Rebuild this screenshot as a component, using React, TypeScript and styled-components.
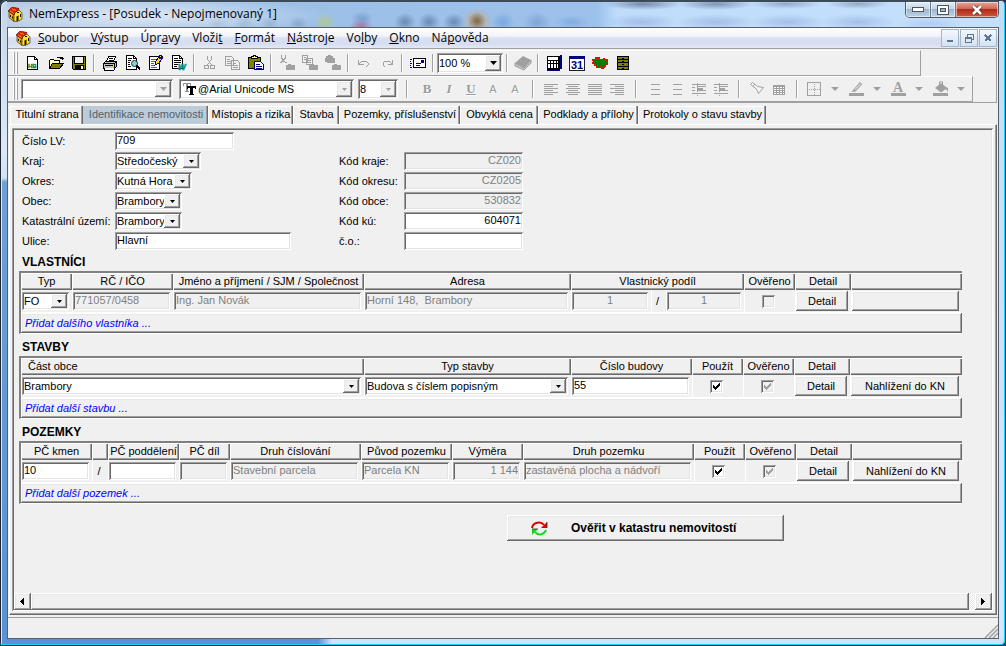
import React from "react";
import styled, { createGlobalStyle, css } from "styled-components";

const face = "#f0f0f0";
const sunken = css`
  box-shadow: inset 1px 1px #a0a0a0, inset -1px -1px #fff, inset 2px 2px #696969, inset -2px -2px #e3e3e3;
`;
const raised = css`
  box-shadow: inset -1px -1px #696969, inset 1px 1px #fff, inset -2px -2px #a0a0a0, inset 2px 2px #e8e8e8;
`;

const GlobalStyle = createGlobalStyle`
  * { box-sizing: border-box; }
  body { margin: 0; background: #26323f; }
  body, button, input, select, table {
    font-family: "Liberation Sans", Arial, sans-serif;
    font-size: 11px;
    color: #000;
  }
  button { cursor: default; }
`;

/* ---------- window frame ---------- */

const Frame = styled.div`
  min-height: 100vh;
  display: flex;
  flex-direction: column;
  padding: 0 7px 7px;
  border-radius: 6px 6px 4px 4px;
  box-shadow: inset 1px 1px #1c2733, inset -1px -1px #1c2733, inset 2px 2px #d9ebfb, inset -2px -2px #12d5f5;
  background:
    linear-gradient(90deg, #5b92cf 0 318px, #cfe4fb 332px) bottom / 100% 8px no-repeat,
    linear-gradient(180deg, #c4d6e8 0, #dbe9f8 150px, #d0e2f6 178px, #6f9fd6 182px, #5b92cf) left / 8px 100% no-repeat,
    linear-gradient(180deg, #c3dcf6, #d4e8fd) right / 8px 100% no-repeat,
    #b5d0ee;
`;

type Blob = [x: number, y: number, rx: number, ry: number, color: string];
const reflections: Blob[] = [
  [140, 14, 190, 20, "#e6eef6dd"],
  [218, 21, 10, 7, "#5d779455"],
  [244, 21, 10, 7, "#5d779455"],
  [270, 21, 9, 7, "#5d779455"],
  [298, 21, 10, 7, "#5d779466"],
  [325, 20, 11, 9, "#b9cf5999"],
  [362, 17, 11, 8, "#5a83bb88"],
  [361, 24, 12, 6, "#c4476a99"],
  [405, 20, 11, 9, "#4f6f96aa"],
  [429, 20, 11, 9, "#4f6f96aa"],
  [454, 20, 11, 9, "#4f6f96aa"],
  [477, 19, 9, 9, "#4a3a2a99"],
  [477, 19, 15, 13, "#d9a45acc"],
  [503, 20, 12, 10, "#5f92cf88"],
  [537, 20, 14, 10, "#5b86bd77"],
  [572, 20, 18, 7, "#5f8fca66"],
  [643, 2, 40, 6, "#33445f88"],
  [642, 20, 36, 8, "#6a7fc455"],
  [716, 2, 38, 6, "#33445f77"],
  [716, 20, 40, 8, "#6a7fc455"],
  [786, 2, 36, 5, "#33445f55"],
  [788, 20, 38, 8, "#6a7fc455"],
  [858, 2, 32, 5, "#33445f55"],
  [858, 20, 38, 8, "#6a7fc455"],
  [930, 22, 34, 6, "#6a7fc433"],
];
const reflectionLayers = reflections
  .map(([x, y, rx, ry, c]) => `radial-gradient(${rx}px ${ry}px at ${x - 7}px ${y}px, ${c}, transparent)`)
  .join(",");

const TitleBar = styled.header`
  display: flex;
  align-items: flex-start;
  height: 27px;
  border-top: 2px solid #3c4a5a;
  background: ${reflectionLayers}, linear-gradient(90deg, #b4c9e0 0, #9dbfe6 240px, #9cc1ec 590px, #bfdcfa 610px, #c4e0fb);
`;

const TitleText = styled.h1`
  flex: 1;
  display: flex;
  align-items: center;
  gap: 6px;
  height: 24px;
  margin: 0;
  padding-left: 1px;
  font: 400 12px/24px "Open Sans", "Segoe UI", sans-serif;
  white-space: nowrap;
`;

const CaptionButtons = styled.div`
  display: flex;
  height: 16px;
  border: 1px solid #4c5a6b;
  border-top: 0;
  border-radius: 0 0 5px 5px;
  overflow: hidden;
`;

const CaptionButton = styled.button<{ $close?: boolean }>`
  display: grid;
  place-items: center;
  width: ${(p) => (p.$close ? 42 : 25)}px;
  padding: 0;
  border: 0;
  border-right: ${(p) => (p.$close ? "0" : "1px solid #66788c")};
  box-shadow: inset 0 0 0 1px #ffffff88;
  background: ${(p) =>
    p.$close
      ? "linear-gradient(#e3a79b 0, #cf6a55 45%, #b3291a 50%, #c95a3c)"
      : "linear-gradient(#e3edf7 0, #c4d5e7 45%, #9fb5cd 50%, #bdd3e9)"};
`;

const Client = styled.div`
  flex: 1;
  display: flex;
  flex-direction: column;
  border: 1px solid #55606c;
  background: ${face};
`;

/* ---------- menu ---------- */

const MenuBar = styled.nav`
  display: flex;
  align-items: center;
  height: 20px;
  padding: 0 1px 0 8px;
  background: linear-gradient(#fff 0, #f2f4fb 40%, #dbe1f2 50%, #d6ddf0 80%, #e4e9f6);
`;

const MenuItems = styled.ul`
  flex: 1;
  display: flex;
  margin: 0;
  padding: 0 0 0 1px;
  list-style: none;
`;

const MenuItem = styled.button`
  padding: 0 6px;
  border: 0;
  background: none;
  font: 12px/20px "Open Sans", "Segoe UI", sans-serif;
  white-space: nowrap;
`;

const MdiButtons = styled.div`
  display: flex;
  gap: 1px;
`;

const MdiButton = styled.button`
  display: grid;
  place-items: center;
  width: 18px;
  height: 18px;
  padding: 0;
  border: 1px solid #a3b5c8;
  background: linear-gradient(#f3f8fd, #d3e2f3);
`;

/* ---------- toolbars ---------- */

const ToolArea = styled.div`
  padding-top: 1px;
  margin-right: 1px;
  border: 1px solid #a0a0a0;
  border-left: 0;
`;

const Toolbar = styled.div<{ $gap: number }>`
  display: flex;
  align-items: center;
  height: 26px;
  margin-right: ${(p) => p.$gap}px;
  padding-left: 5px;
  border: 1px solid #a0a0a0;
  border-top-color: #fff;
  border-left: 0;
`;

const Grip = styled.span`
  width: 6px;
  height: 22px;
  margin-right: 2px;
  background: linear-gradient(90deg, #fff 0 1px, #a0a0a0 1px 2px, ${face} 2px 3px, #fff 3px 4px, #a0a0a0 4px 5px, ${face} 5px);
`;

const ToolButton = styled.button<{ $w?: number }>`
  display: grid;
  place-items: center;
  width: ${(p) => p.$w ?? 23}px;
  height: 22px;
  padding: 0;
  border: 0;
  background: none;
`;

const Separator = styled.span<{ $w?: number }>`
  width: ${(p) => p.$w ?? 8}px;
  height: 18px;
  background: linear-gradient(90deg, #a0a0a0 0 1px, #fff 1px 2px) center / 2px 100% no-repeat;
`;

const Spacer = styled.span<{ $w: number }>`
  width: ${(p) => p.$w}px;
`;

const Glyph = styled.span<{ $i?: boolean; $u?: boolean; $thin?: boolean }>`
  font: ${(p) => (p.$i ? "italic" : "normal")} ${(p) => (p.$thin ? "400 11px" : "700 13px")} / 16px
    ${(p) => (p.$thin ? '"Liberation Sans", sans-serif' : '"Liberation Serif", serif')};
  text-decoration: ${(p) => (p.$u ? "underline" : "none")};
  color: #9a9a9a;
  text-shadow: 1px 1px #fff;
`;

/* ---------- fields ---------- */

const TextField = styled.input<{ $w?: number; $align?: string }>`
  display: block;
  width: ${(p) => (p.$w ? `${p.$w}px` : "100%")};
  height: 18px;
  padding: 0 2px 2px;
  border: 0;
  border-radius: 0;
  outline: 0;
  background: #fff;
  text-align: ${(p) => p.$align ?? "left"};
  ${sunken}
  &:disabled {
    background: ${face};
    color: #808080;
  }
`;

const ComboBox = styled.span<{ $w?: number; $h?: number }>`
  display: inline-grid;
  align-items: center;
  width: ${(p) => (p.$w ? `${p.$w}px` : "100%")};
  height: ${(p) => p.$h ?? 18}px;
  background: #fff;
  ${sunken}
  > * {
    grid-area: 1 / 1;
  }
`;

const ComboSelect = styled.select<{ $indent?: number }>`
  appearance: none;
  width: 100%;
  height: 100%;
  padding: 0 16px 1px ${(p) => p.$indent ?? 2}px;
  border: 0;
  outline: 0;
  background: none;
`;

const ComboArrow = styled.span<{ $dim?: boolean; $h: number }>`
  justify-self: end;
  display: grid;
  place-items: center;
  width: 16px;
  height: ${(p) => p.$h - 4}px;
  margin-right: 2px;
  pointer-events: none;
  color: ${(p) => (p.$dim ? "#a0a0a0" : "#000")};
  background: ${face};
  ${raised}
`;

const ComboIcon = styled.span`
  display: grid;
  justify-self: start;
  padding-left: 4px;
  pointer-events: none;
`;

const Combo = (p: { label: string; value?: string; w?: number; h?: number; dim?: boolean; id?: string; icon?: React.ReactNode; wide?: boolean }) => {
  const h = p.h ?? 18;
  return (
    <ComboBox $w={p.w} $h={h}>
      <ComboSelect id={p.id} aria-label={p.label} $indent={p.icon ? 19 : 2}>
        <option>{p.value ?? ""}</option>
      </ComboSelect>
      {p.icon && <ComboIcon>{p.icon}</ComboIcon>}
      <ComboArrow $dim={p.dim} $h={h}>
        <svg width={p.wide ? 7 : 5} height={p.wide ? 4 : 3} viewBox="0 0 7 4">
          <path d="M0 0h7L3.5 4z" fill="currentColor" />
        </svg>
      </ComboArrow>
    </ComboBox>
  );
};

const PushButton = styled.button`
  display: block;
  width: 100%;
  height: 20px;
  padding: 0;
  border: 0;
  background: ${face};
  ${raised}
`;

const TickWrap = styled.span`
  display: inline-grid;
  place-items: center;
  vertical-align: middle;
  > * {
    grid-area: 1 / 1;
  }
  svg {
    pointer-events: none;
  }
`;

const TickBox = styled.input`
  appearance: none;
  width: 13px;
  height: 13px;
  margin: 0;
  background: #fff;
  ${sunken}
  &:disabled {
    background: ${face};
  }
  &:not(:checked) + svg {
    display: none;
  }
`;

const Tick = (p: { label: string; checked?: boolean; disabled?: boolean }) => (
  <TickWrap>
    <TickBox type="checkbox" aria-label={p.label} defaultChecked={p.checked} disabled={p.disabled} />
    <svg width="7" height="7" viewBox="0 0 7 7" shapeRendering="crispEdges" fill={p.disabled ? "#a0a0a0" : "#000"}>
      <path d="M0 2h1v3H0zM1 3h1v3H1zM2 4h1v3H2zM3 3h1v3H3zM4 2h1v3H4zM5 1h1v3H5zM6 0h1v3H6z" />
    </svg>
  </TickWrap>
);

/* ---------- tabs and panel ---------- */

const Tabs = styled.div`
  display: flex;
  height: 18px;
  margin: 3px 0 0 2px;
`;

const Tab = styled.button<{ $w: number; $on?: boolean }>`
  width: ${(p) => p.$w}px;
  padding: 0 0 2px 2px;
  border: 0;
  border-right: 1px solid #696969;
  white-space: nowrap;
  background: ${(p) => (p.$on ? "#bccbd8" : face)};
  color: ${(p) => (p.$on ? "#55606a" : "#000")};
  box-shadow: inset -1px 0 #a0a0a0, inset 1px 1px ${(p) => (p.$on ? "#bccbd8" : "#fff")};
`;

const TabBody = styled.main`
  flex: 1;
  display: flex;
  margin: 0 1px 1px;
  padding: 3px 3px 3px 2px;
  border: 1px solid #fff;
  border-right-color: #696969;
  border-bottom-color: #696969;
  box-shadow: inset -1px -1px #a0a0a0;
`;

const Sheet = styled.div`
  flex: 1;
  display: flex;
  flex-direction: column;
  min-width: 0;
  padding: 3px 1px 1px 2px;
  ${sunken}
`;

const FormGrid = styled.div`
  display: grid;
  grid-template-columns: 93px 224px 65px 119px;
  grid-auto-rows: 20px;
  align-items: center;
  padding-left: 8px;
`;

const Label = styled.label<{ $col?: number }>`
  grid-column: ${(p) => p.$col ?? 1};
  white-space: nowrap;
`;

const Section = styled.section`
  padding: 3px 30px 2px 5px;
`;

const SectionTitle = styled.h2`
  margin: 0;
  padding-left: 3px;
  font-size: 12px;
  font-weight: 700;
  line-height: 17px;
`;

const DataTable = styled.table`
  width: 100%;
  table-layout: fixed;
  border-spacing: 0;
  background: #fff;
  border: 2px solid #696969;
  border-top-color: #808080;
  border-left-color: #808080;
  border-right: 0;
  border-bottom: 1px solid #fff;
`;

const HeadCell = styled.th<{ $left?: boolean }>`
  height: 17px;
  padding: 0 0 1px ${(p) => (p.$left ? 7 : 0)}px;
  font-weight: 400;
  line-height: 15px;
  text-align: ${(p) => (p.$left ? "left" : "center")};
  white-space: nowrap;
  background: ${face};
  box-shadow: inset 1px 1px #fff, inset -1px -1px #696969, inset -2px -2px #a0a0a0;
`;

const Cell = styled.td`
  height: 23px;
  padding: 0 3px 0 0;
  border-left: 1px solid #fff;
  border-bottom: 1px solid #fff;
  text-align: center;
  background: ${face};
`;

const AddCell = styled.td`
  height: 20px;
  padding: 1px 0 0 4px;
  line-height: 15px;
  background: ${face};
  ${raised}
`;

const AddLink = styled.a`
  color: #0000ff;
  font-style: italic;
  text-decoration: none;
`;

const VerifyButton = styled.button`
  display: flex;
  align-items: center;
  gap: 23px;
  width: 277px;
  height: 26px;
  margin: 9px auto 0 493px;
  padding: 0 0 0 24px;
  border: 0;
  font-size: 12px;
  font-weight: 700;
  white-space: nowrap;
  background: ${face};
  ${raised}
`;

const ScrollBar = styled.div`
  display: flex;
  height: 17px;
  margin-top: auto;
  background: repeating-conic-gradient(#fff 0 25%, #e6e6e6 0 50%) 0 0 / 2px 2px;
`;

const ScrollButton = styled.button`
  display: grid;
  place-items: center;
  width: 17px;
  padding: 0 2px 0 0;
  border: 0;
  background: ${face};
  ${raised}
`;

const ScrollThumb = styled.div`
  flex: 1;
  margin-right: 6px;
  background: ${face};
  ${raised}
`;

const StatusBar = styled.footer`
  display: flex;
  justify-content: flex-end;
  align-items: flex-end;
  height: 21px;
  margin-top: 1px;
  border-top: 1px solid #a0a0a0;
`;

/* ---------- drawings ---------- */

const Svg = (p: { w?: number; h?: number; children: React.ReactNode }) => (
  <svg width={p.w ?? 16} height={p.h ?? 16} viewBox={`0 0 ${p.w ?? 16} ${p.h ?? 16}`} shapeRendering="crispEdges" fill="none">
    {p.children}
  </svg>
);

const G = "#a0a0a0";

const Logo = () => (
  <svg width="15" height="15" viewBox="0 0 15 15">
    <path d="M1 4l5 4v6.500l-5-4z" fill="#f2b705" stroke="#2a1200" strokeWidth=".6" />
    <path d="M6 8l1-3 4-2 3 3v6l-5 2.700-3-.5z" fill="#ffe22e" stroke="#2a1200" strokeWidth=".6" />
    <path d="M0 4l4-4 7 1.500-1 2-3 1.500-1 3z" fill="#e02010" stroke="#4a0000" strokeWidth=".6" />
    <path d="M2 4l4 2.500M4 2l4 1.500" stroke="#ffb000" strokeWidth=".8" />
    <path d="M8.500 9.500l2-1v5l-2 .8z" fill="#201000" />
    <path d="M2.500 8v2M4.500 9.500v2M12.500 7v3M9 5.500h2" stroke="#201000" />
  </svg>
);

const NewDoc = () => (
  <Svg>
    <path d="M2.500 1.500h7l3 3v10h-10z" fill="#fff" stroke="#000" />
    <path d="M9.500 1.500v3h3" stroke="#000" />
    <text x="3" y="13" fontSize="6" fontWeight="700" fill="#008040" stroke="#008040" strokeWidth=".3">HB</text>
  </Svg>
);
const Open = () => (
  <Svg>
    <path d="M1.500 13.500v-8l1-1h3l1 1h5v3" fill="#ffffc0" stroke="#000" />
    <path d="M1.500 13.500l3-5h11l-4 5z" fill="#808000" stroke="#000" />
    <path d="M9.500 3v-1h4v2M12 3.500h4M14.500 1.500v3" stroke="#000" />
  </Svg>
);
const Save = () => (
  <Svg>
    <path d="M1.500 1.500h13v13h-12l-1-1z" fill="#808000" stroke="#000" />
    <path d="M4 2h8v6H4z" fill="#f0f0f0" stroke="none" />
    <path d="M4 10h9v4H4z" fill="#000" />
    <path d="M10 11h2v3h-2z" fill="#f0f0f0" />
    <path d="M3.500 2v6.500h8.500v-6.500" stroke="#000" />
  </Svg>
);
const Print = () => (
  <Svg>
    <path d="M4.500 6.500l2-5h7l-2 5" fill="#fff" stroke="#000" />
    <path d="M7 3.500h4M6.500 5.500h4" stroke="#000" />
    <path d="M1.500 8.500l2-2h10l1 1v4l-2 2h-11z" fill="#c0c0c0" stroke="#000" />
    <path d="M1.500 8.500h11v5M12.500 8.500l2-2M3 10.500h8" stroke="#000" />
    <path d="M2.500 13.500v2h9l2-3" fill="#fff" stroke="#000" />
    <path d="M9 11h2v1H9z" fill="#ffe000" />
  </Svg>
);
const Preview = () => (
  <Svg>
    <path d="M1.500 .5h7l3 3v11h-10z" fill="#fff" stroke="#000" />
    <path d="M8.500 .5v3h3M3 3.500h4M3 5.500h3M3 7.500h2M3 9.500h2M3 11.500h3" stroke="#000" />
    <circle cx="9.500" cy="8.500" r="3" fill="#7fd6d6" stroke="#303030" shapeRendering="auto" />
    <path d="M11.500 10.500l3.500 4" stroke="#000" strokeWidth="2" />
  </Svg>
);
const Notes = () => (
  <Svg>
    <path d="M1.500 1.500h10v13h-10z" fill="#fff" stroke="#000" />
    <path d="M3 4.500h5M3 6.500h4M3 8.500h3M3 10.500h3M3 12.500h6" stroke="#606060" />
    <path d="M7 10l1-4 4-6 3 2-4 6z" fill="#ffe000" stroke="#000080" />
    <path d="M11 2l3 2" stroke="#0000c0" strokeWidth="2" />
  </Svg>
);
const WordExport = () => (
  <Svg>
    <path d="M1.500 .5h7l3 3v10h-10z" fill="#fff" stroke="#000" />
    <path d="M8.500 .5v3h3M3 3.500h4M3 5.500h7M3 7.500h7M3 9.500h4M3 11.500h3" stroke="#000" />
    <text x="7" y="15" fontSize="10" fontWeight="700" fontStyle="italic" fill="#009090" stroke="#009090" strokeWidth=".5">w</text>
  </Svg>
);
const Cut = () => (
  <Svg>
    <path d="M5.500 1v3l4 6M9.500 1v3l-4 6" stroke={G} />
    <circle cx="4.500" cy="12" r="2" stroke={G} />
    <circle cx="10.500" cy="12" r="2" stroke={G} />
  </Svg>
);
const Copy = () => (
  <Svg>
    <path d="M.5 1.500h6l2 2v7h-8zM6.500 5.500h6l2 2v7h-8z" fill="#f0f0f0" stroke={G} />
    <path d="M2 4.500h3M2 6.500h4M2 8.500h4M8 8.500h3M8 10.500h5M8 12.500h5" stroke={G} />
  </Svg>
);
const Paste = () => (
  <Svg>
    <path d="M.5 2.500h12v11h-12z" fill="#808000" stroke="#000" />
    <path d="M3.500 3.500v-2h2v-1h2v1h2v2z" fill="#ffff80" stroke="#000" />
    <path d="M6.500 6.500h6l3 3v5h-9z" fill="#fff" stroke="#000080" />
    <path d="M8 9.500h4M8 11.500h6M8 13h6" stroke="#000080" />
  </Svg>
);
const CutTo = () => (
  <Svg>
    <path d="M2.500 0v3l3 4M6.500 0v3l-4 4M1 7.500h2M6 7.500h2" stroke={G} />
    <path d="M7 10h2v-1h3v1h4v5H7z" fill={G} />
  </Svg>
);
const CopyTo = () => (
  <Svg>
    <path d="M.5 .5h5v7h-5zM4.500 3.500h6v6h-6z" fill="#f0f0f0" stroke={G} />
    <path d="M2 2.500h2M2 4.500h2M6 5.500h3M6 7.500h3" stroke={G} />
    <path d="M7 10h2v-1h3v1h4v5H7z" fill={G} />
  </Svg>
);
const PasteTo = () => (
  <Svg>
    <path d="M1 1h2v-1h3v1h2v2h2v5H2v-1H0V3h1z" fill={G} />
    <path d="M7 10h2v-1h3v1h4v5H7z" fill={G} />
  </Svg>
);
const Undo = () => (
  <Svg>
    <path d="M2.500 5v4.500h5M3 9l3-3h4l2 2v2l-2 2" stroke={G} />
  </Svg>
);
const Redo = () => (
  <Svg>
    <path d="M13.500 5v4.500h-5M13 9l-3-3h-4l-2 2v2l2 2" stroke={G} />
  </Svg>
);
const Mail = () => (
  <Svg>
    <path d="M3.500 3.500h12v9h-12z" fill="#fff" stroke="#000" />
    <path d="M11 5h3v3h-3z" fill="#000080" />
    <path d="M6 8.500h5M6 10.500h4" stroke="#000080" />
    <path d="M0 4.500h2M0 6.500h1M0 8.500h2M0 10.500h1M0 12.500h2" stroke="#000080" />
  </Svg>
);
const Book = () => (
  <svg width="18" height="16" viewBox="0 0 18 16">
    <path d="M1 8l8-7 8 4-7 8z" fill={G} />
    <path d="M1 8v3l9 4 7-7V5l-7 8z" fill="#c4c4c4" stroke={G} />
  </svg>
);
const Calculator = () => (
  <Svg>
    <path d="M1 1h13v14H1z" fill="#000" />
    <path d="M2 2h10v3H2z" fill="#fff" />
    <path d="M2 7h10M2 9.500h10M2 12h10" stroke="#fff" strokeWidth="2" strokeDasharray="2 1" />
    <path d="M14 0h2v14h-2z" fill="#000080" />
    <path d="M1 15h13" stroke="#000080" />
  </Svg>
);
const Calendar = () => (
  <Svg>
    <path d="M.5 1.500h15v14H.5z" fill="#fff" stroke="#202020" />
    <path d="M1 1h15v3H1z" fill="#000080" />
    <text x="2" y="14" fontSize="11" fontWeight="700" fill="#000080">31</text>
  </Svg>
);
const CzechMap = () => (
  <Svg>
    <path d="M1 5l2-1 2-2 3 2 2 1 2-1 4 1v3l-3 3-2 2-3-1-2 1-3-3-2-2z" fill="#008000" stroke="#008000" />
    <path d="M1 5l2-1 2-2 3 2 2 1 2-1 4 1v3l-3 3-2 2-3-1-2 1-3-3-2-2z" stroke="#ff0000" strokeWidth="2" strokeDasharray="2 1" />
  </Svg>
);
const Cabinet = () => (
  <Svg>
    <path d="M2.500 1.500h11v13h-11z" fill="#808000" stroke="#000" />
    <path d="M3 4.500h10M3 7.500h10M3 11.500h10" stroke="#000" />
    <path d="M7 3h2M7 6h2M7 9.500h2M7 13h2" stroke="#000" />
  </Svg>
);
const FontMark = () => (
  <Svg w={14} h={14}>
    <path d="M0 1h8v3H7V2H5v7h1v1H2V9h1V2H1v2H0z" fill="#909090" />
    <path d="M4 4h9v3h-1V6h-2v6h1v1H6v-1h1V6H5v1H4z" fill="#000" />
  </Svg>
);

const Lines = (p: { rows: [number, number][] }) => (
  <Svg>
    {p.rows.map(([x, w], i) => (
      <path key={i} d={`M${x} ${i * 2 + 3}.5h${w}`} stroke={G} />
    ))}
  </Svg>
);
const alignLeft: [number, number][] = [[1, 14], [1, 9], [1, 14], [1, 9], [1, 14], [1, 9]];
const alignCenter: [number, number][] = [[1, 14], [3, 10], [1, 14], [3, 10], [1, 14], [3, 10]];
const alignFull: [number, number][] = [[1, 14], [1, 14], [1, 14], [1, 14], [1, 14], [1, 14]];
const alignRight: [number, number][] = [[1, 14], [6, 9], [1, 14], [6, 9], [1, 14], [6, 9]];

const ListLines = () => (
  <Svg>
    <path d="M4 3.500h9M4 8.500h9M4 13.500h9" stroke={G} />
  </Svg>
);
const Indent = () => (
  <Svg>
    <path d="M1 3.500h14M6 5.500h9M6 7.500h6M6 9.500h9M1 12.500h14M1 9.500h3M1 6.500h3" stroke={G} />
    <path d="M6.500 2v13" stroke={G} strokeDasharray="1 1" />
    <path d="M7 5h8v1H7zM7 7h5v2H7z" fill={G} />
  </Svg>
);
const Painter = () => (
  <svg width="16" height="16" viewBox="0 0 16 16">
    <path d="M1.500 3.500l2-2 5 4 6 1-5 6-2-4.500z" fill="#f6f6f6" stroke={G} />
    <path d="M4 5l2-2" stroke={G} />
  </svg>
);
const Grid = () => (
  <Svg>
    <path d="M2 4h12v10H2z" fill={G} />
    <path d="M3 6.500h10M3 8.500h10M3 10.500h10M3 12.500h10" stroke="#fff" strokeDasharray="2 1" />
  </Svg>
);
const Borders = () => (
  <Svg>
    <path d="M1.500 1.500h13v13h-13z" stroke={G} />
    <path d="M8.500 3v11M3 8.500h11" stroke={G} strokeDasharray="1 1" />
  </Svg>
);
const Highlighter = () => (
  <svg width="16" height="16" viewBox="0 0 16 16">
    <path d="M5 9l7-8 2.500 2-7 7.500-4 .5z" fill={G} />
    <path d="M7 8.500l6-6" stroke="#fff" />
    <path d="M1 12h15v3H1z" fill={G} />
  </svg>
);
const FontColor = () => (
  <Svg>
    <text x="3" y="11" fontSize="14" fontWeight="700" fontFamily="Liberation Serif, serif" fill={G}>A</text>
    <path d="M1 12h15v3H1z" fill={G} />
  </Svg>
);
const Bucket = () => (
  <svg width="16" height="16" viewBox="0 0 16 16">
    <path d="M3 7l6-5 5 4 2 1v4l-2-3-5 3.500z" fill={G} />
    <path d="M7.500 6V.8h3V4" fill="none" stroke={G} />
    <path d="M1 12h15v3H1z" fill={G} />
  </svg>
);
const Down = () => (
  <svg width="8" height="4" viewBox="0 0 8 4">
    <path d="M0 0h8L4 4z" fill={G} />
  </svg>
);
const Refresh = () => (
  <svg width="17" height="15" viewBox="0 0 17 15">
    <path d="M1 7c1-6 9-7 12-3" fill="none" stroke="#e00000" strokeWidth="2" />
    <path d="M16 1v6h-6z" fill="#e00000" />
    <path d="M15 9c-2 5-8 6-11 2" fill="none" stroke="#10d818" strokeWidth="2" />
    <path d="M1 8h6l-6 6z" fill="#10d818" />
    <path d="M1 8h6M16 1v6" stroke="#204020" strokeWidth=".8" />
  </svg>
);

/* ---------- data ---------- */

const menus: [string, string, string][] = [
  ["", "S", "oubor"],
  ["", "V", "ýstup"],
  ["Úpr", "a", "vy"],
  ["Vloži", "t", ""],
  ["", "F", "ormát"],
  ["", "N", "ástroje"],
  ["Vo", "l", "by"],
  ["", "O", "kno"],
  ["Ná", "p", "ověda"],
];

const mainTools: [string, React.ReactNode][][] = [
  [["Nový", <NewDoc />], ["Otevřít", <Open />], ["Uložit", <Save />]],
  [["Tisk", <Print />], ["Náhled", <Preview />], ["Poznámky", <Notes />], ["Export", <WordExport />]],
  [["Vyjmout", <Cut />], ["Kopírovat", <Copy />], ["Vložit", <Paste />]],
  [["Vyjmout do", <CutTo />], ["Kopírovat do", <CopyTo />], ["Vložit do", <PasteTo />]],
  [["Zpět", <Undo />], ["Znovu", <Redo />]],
  [["Odeslat", <Mail />]],
];
const extraTools: [string, React.ReactNode][] = [
  ["Kalkulačka", <Calculator />],
  ["Kalendář", <Calendar />],
  ["Mapa", <CzechMap />],
  ["Archiv", <Cabinet />],
];
const formatTools: [string, React.ReactNode][][] = [
  [
    ["Tučné", <Glyph>B</Glyph>],
    ["Kurzíva", <Glyph $i>I</Glyph>],
    ["Podtržené", <Glyph $u>U</Glyph>],
    ["Zvětšit", <Glyph $thin>A</Glyph>],
    ["Zmenšit", <Glyph $thin>A</Glyph>],
  ],
  [
    ["Vlevo", <Lines rows={alignLeft} />],
    ["Na střed", <Lines rows={alignCenter} />],
    ["Do bloku", <Lines rows={alignFull} />],
    ["Vpravo", <Lines rows={alignRight} />],
  ],
  [["Odrážky", <ListLines />], ["Číslování", <ListLines />], ["Zmenšit odsazení", <Indent />], ["Zvětšit odsazení", <Indent />]],
  [["Formát", <Painter />], ["Tabulka", <Grid />]],
];
const formatGaps = [14, 16, 14, 13];
const colorTools: [string, React.ReactNode][] = [
  ["Ohraničení", <Borders />],
  ["Zvýraznění", <Highlighter />],
  ["Barva písma", <FontColor />],
  ["Výplň", <Bucket />],
];

const tabs: [string, number][] = [
  ["Titulní strana", 73],
  ["Identifikace nemovitosti", 125],
  ["Místopis a rizika", 85],
  ["Stavba", 46],
  ["Pozemky, příslušenství", 121],
  ["Obvyklá cena", 78],
  ["Podklady a přílohy", 100],
  ["Protokoly o stavu stavby", 128],
];

const Cols = (p: { widths: number[] }) => (
  <colgroup>
    {p.widths.map((w, i) => (
      <col key={i} width={w} />
    ))}
    <col />
  </colgroup>
);

const AddRow = (p: { span: number; children: React.ReactNode }) => (
  <tfoot>
    <tr>
      <AddCell colSpan={p.span}>
        <AddLink href="#">{p.children}</AddLink>
      </AddCell>
    </tr>
  </tfoot>
);

export default function App() {
  return (
    <Frame>
      <GlobalStyle />
      <TitleBar>
        <TitleText>
          <Logo />
          NemExpress - [Posudek - Nepojmenovaný 1]
        </TitleText>
        <CaptionButtons>
          <CaptionButton aria-label="Minimalizovat">
            <svg width="12" height="5"><rect x=".5" y=".5" width="11" height="4" fill="#fff" stroke="#4a5662" /></svg>
          </CaptionButton>
          <CaptionButton aria-label="Maximalizovat">
            <svg width="12" height="10" fill="none"><rect x="2" y="2" width="8" height="6" stroke="#4a5662" strokeWidth="4" /><rect x="2" y="2" width="8" height="6" stroke="#fff" strokeWidth="2" /></svg>
          </CaptionButton>
          <CaptionButton $close aria-label="Zavřít">
            <svg width="12" height="10" fill="none"><path d="M2 1l8 8M10 1l-8 8" stroke="#5a3030" strokeWidth="4" /><path d="M2 1l8 8M10 1l-8 8" stroke="#fff" strokeWidth="2.500" /></svg>
          </CaptionButton>
        </CaptionButtons>
      </TitleBar>
      <Client>
        <MenuBar>
          <Logo />
          <MenuItems>
            {menus.map(([a, u, b]) => (
              <li key={a + u + b}>
                <MenuItem>{a}<u>{u}</u>{b}</MenuItem>
              </li>
            ))}
          </MenuItems>
          <MdiButtons>
            <MdiButton aria-label="Minimalizovat okno"><Svg w={10} h={10}><path d="M2 7h6v2H2z" fill="#5c7590" /></Svg></MdiButton>
            <MdiButton aria-label="Obnovit okno"><Svg w={10} h={10}><path d="M3 4V1h6v5H7M3 1.500h6M1 4h6v5H1zM1 5h6" stroke="#5c7590" /></Svg></MdiButton>
            <MdiButton aria-label="Zavřít okno"><Svg w={10} h={10}><path d="M2 2l6 6M8 2l-6 6" stroke="#5c7590" strokeWidth="2" /></Svg></MdiButton>
          </MdiButtons>
        </MenuBar>

        <ToolArea>
          <Toolbar $gap={75}>
            <Grip />
            {mainTools.map((group, i) => (
              <React.Fragment key={i}>
                {group.map(([name, icon]) => (
                  <ToolButton key={name} aria-label={name}>{icon}</ToolButton>
                ))}
                <Separator />
              </React.Fragment>
            ))}
            <Combo label="Měřítko" value="100 %" w={66} h={20} wide />
            <Separator />
            <ToolButton aria-label="Slovník"><Book /></ToolButton>
            <Separator />
            {extraTools.map(([name, icon]) => (
              <ToolButton key={name} aria-label={name}>{icon}</ToolButton>
            ))}
          </Toolbar>
          <Toolbar $gap={23}>
            <Grip />
            <Combo label="Styl" w={152} h={20} dim wide />
            <Spacer $w={6} />
            <Combo label="Písmo" value="@Arial Unicode MS" w={175} h={20} dim icon={<FontMark />} />
            <Spacer $w={4} />
            <Combo label="Velikost" value="8" w={40} h={20} dim />
            <Separator $w={18} />
            {formatTools.map((group, i) => (
              <React.Fragment key={i}>
                {group.map(([name, icon]) => (
                  <ToolButton key={name} $w={22} aria-label={name}>{icon}</ToolButton>
                ))}
                <Separator $w={formatGaps[i]} />
              </React.Fragment>
            ))}
            {colorTools.map(([name, icon]) => (
              <React.Fragment key={name}>
                <ToolButton $w={21} aria-label={name}>{icon}</ToolButton>
                <ToolButton $w={21} aria-label={`${name} – možnosti`}><Down /></ToolButton>
              </React.Fragment>
            ))}
          </Toolbar>
        </ToolArea>

        <Tabs role="tablist">
          {tabs.map(([name, w], i) => (
            <Tab key={name} role="tab" aria-selected={i === 1} $w={w} $on={i === 1}>{name}</Tab>
          ))}
        </Tabs>

        <TabBody>
          <Sheet>
            <FormGrid>
              <Label htmlFor="lv">Číslo LV:</Label>
              <TextField id="lv" $w={119} defaultValue="709" />
              <Label htmlFor="kraj">Kraj:</Label>
              <Combo id="kraj" label="Kraj" value="Středočeský" w={86} />
              <Label $col={3} htmlFor="kkraj">Kód kraje:</Label>
              <TextField id="kkraj" $align="right" disabled defaultValue="CZ020" />
              <Label htmlFor="okres">Okres:</Label>
              <Combo id="okres" label="Okres" value="Kutná Hora" w={77} />
              <Label $col={3} htmlFor="kokres">Kód okresu:</Label>
              <TextField id="kokres" $align="right" disabled defaultValue="CZ0205" />
              <Label htmlFor="obec">Obec:</Label>
              <Combo id="obec" label="Obec" value="Brambory" w={67} />
              <Label $col={3} htmlFor="kobec">Kód obce:</Label>
              <TextField id="kobec" $align="right" disabled defaultValue="530832" />
              <Label htmlFor="ku">Katastrální území:</Label>
              <Combo id="ku" label="Katastrální území" value="Brambory" w={67} />
              <Label $col={3} htmlFor="kku">Kód kú:</Label>
              <TextField id="kku" $align="right" defaultValue="604071" />
              <Label htmlFor="ulice">Ulice:</Label>
              <TextField id="ulice" $w={176} defaultValue="Hlavní" />
              <Label $col={3} htmlFor="co">č.o.:</Label>
              <TextField id="co" />
            </FormGrid>

            <Section>
              <SectionTitle>VLASTNÍCI</SectionTitle>
              <DataTable>
                <Cols widths={[51, 101, 191, 207, 80, 15, 78, 51, 56]} />
                <thead>
                  <tr>
                    <HeadCell>Typ</HeadCell>
                    <HeadCell>RČ / IČO</HeadCell>
                    <HeadCell>Jméno a příjmení / SJM / Společnost</HeadCell>
                    <HeadCell>Adresa</HeadCell>
                    <HeadCell colSpan={3}>Vlastnický podíl</HeadCell>
                    <HeadCell>Ověřeno</HeadCell>
                    <HeadCell>Detail</HeadCell>
                    <HeadCell />
                  </tr>
                </thead>
                <tbody>
                  <tr>
                    <Cell><Combo label="Typ" value="FO" /></Cell>
                    <Cell><TextField aria-label="RČ / IČO" disabled defaultValue="771057/0458" /></Cell>
                    <Cell><TextField aria-label="Jméno" disabled defaultValue="Ing. Jan Novák" /></Cell>
                    <Cell><TextField aria-label="Adresa" disabled defaultValue="Horní 148,  Brambory" /></Cell>
                    <Cell><TextField aria-label="Podíl čitatel" $align="center" disabled defaultValue="1" /></Cell>
                    <Cell>/</Cell>
                    <Cell><TextField aria-label="Podíl jmenovatel" $align="center" disabled defaultValue="1" /></Cell>
                    <Cell><Tick label="Ověřeno" disabled /></Cell>
                    <Cell><PushButton>Detail</PushButton></Cell>
                    <Cell><PushButton aria-label="Nahlížení" /></Cell>
                  </tr>
                </tbody>
                <AddRow span={10}>Přidat dalšího vlastníka ...</AddRow>
              </DataTable>
            </Section>

            <Section>
              <SectionTitle>STAVBY</SectionTitle>
              <DataTable>
                <Cols widths={[343, 207, 121, 51, 51, 56]} />
                <thead>
                  <tr>
                    <HeadCell $left>Část obce</HeadCell>
                    <HeadCell>Typ stavby</HeadCell>
                    <HeadCell>Číslo budovy</HeadCell>
                    <HeadCell>Použít</HeadCell>
                    <HeadCell>Ověřeno</HeadCell>
                    <HeadCell>Detail</HeadCell>
                    <HeadCell />
                  </tr>
                </thead>
                <tbody>
                  <tr>
                    <Cell><Combo label="Část obce" value="Brambory" /></Cell>
                    <Cell><Combo label="Typ stavby" value="Budova s číslem popisným" /></Cell>
                    <Cell><TextField aria-label="Číslo budovy" defaultValue="55" /></Cell>
                    <Cell><Tick label="Použít" checked /></Cell>
                    <Cell><Tick label="Ověřeno" checked disabled /></Cell>
                    <Cell><PushButton>Detail</PushButton></Cell>
                    <Cell><PushButton>Nahlížení do KN</PushButton></Cell>
                  </tr>
                </tbody>
                <AddRow span={7}>Přidat další stavbu ...</AddRow>
              </DataTable>
            </Section>

            <Section>
              <SectionTitle>POZEMKY</SectionTitle>
              <DataTable>
                <Cols widths={[71, 16, 71, 51, 131, 91, 71, 171, 51, 51, 56]} />
                <thead>
                  <tr>
                    <HeadCell>PČ kmen</HeadCell>
                    <HeadCell />
                    <HeadCell>PČ poddělení</HeadCell>
                    <HeadCell>PČ díl</HeadCell>
                    <HeadCell>Druh číslování</HeadCell>
                    <HeadCell>Původ pozemku</HeadCell>
                    <HeadCell>Výměra</HeadCell>
                    <HeadCell>Druh pozemku</HeadCell>
                    <HeadCell>Použít</HeadCell>
                    <HeadCell>Ověřeno</HeadCell>
                    <HeadCell>Detail</HeadCell>
                    <HeadCell />
                  </tr>
                </thead>
                <tbody>
                  <tr>
                    <Cell><TextField aria-label="PČ kmen" defaultValue="10" /></Cell>
                    <Cell>/</Cell>
                    <Cell><TextField aria-label="PČ poddělení" /></Cell>
                    <Cell><TextField aria-label="PČ díl" disabled /></Cell>
                    <Cell><TextField aria-label="Druh číslování" disabled defaultValue="Stavební parcela" /></Cell>
                    <Cell><TextField aria-label="Původ pozemku" disabled defaultValue="Parcela KN" /></Cell>
                    <Cell><TextField aria-label="Výměra" $align="right" disabled defaultValue="1 144" /></Cell>
                    <Cell><TextField aria-label="Druh pozemku" disabled defaultValue="zastavěná plocha a nádvoří" /></Cell>
                    <Cell><Tick label="Použít" checked /></Cell>
                    <Cell><Tick label="Ověřeno" checked disabled /></Cell>
                    <Cell><PushButton>Detail</PushButton></Cell>
                    <Cell><PushButton>Nahlížení do KN</PushButton></Cell>
                  </tr>
                </tbody>
                <AddRow span={12}>Přidat další pozemek ...</AddRow>
              </DataTable>
            </Section>

            <VerifyButton>
              <Refresh />
              Ověřit v katastru nemovitostí
            </VerifyButton>

            <ScrollBar>
              <ScrollButton aria-label="Posunout vlevo">
                <Svg w={4} h={7}><path d="M4 0v7L0 3.500z" fill="#000" /></Svg>
              </ScrollButton>
              <ScrollThumb />
              <ScrollButton aria-label="Posunout vpravo">
                <Svg w={4} h={7}><path d="M0 0v7l4-3.500z" fill="#000" /></Svg>
              </ScrollButton>
            </ScrollBar>
          </Sheet>
        </TabBody>

        <StatusBar>
          <svg width="14" height="14" viewBox="0 0 14 14" stroke={G} strokeWidth="1.500">
            <path d="M1 14L14 1M5 14l9-9M9 14l5-5" />
          </svg>
        </StatusBar>
      </Client>
    </Frame>
  );
}
